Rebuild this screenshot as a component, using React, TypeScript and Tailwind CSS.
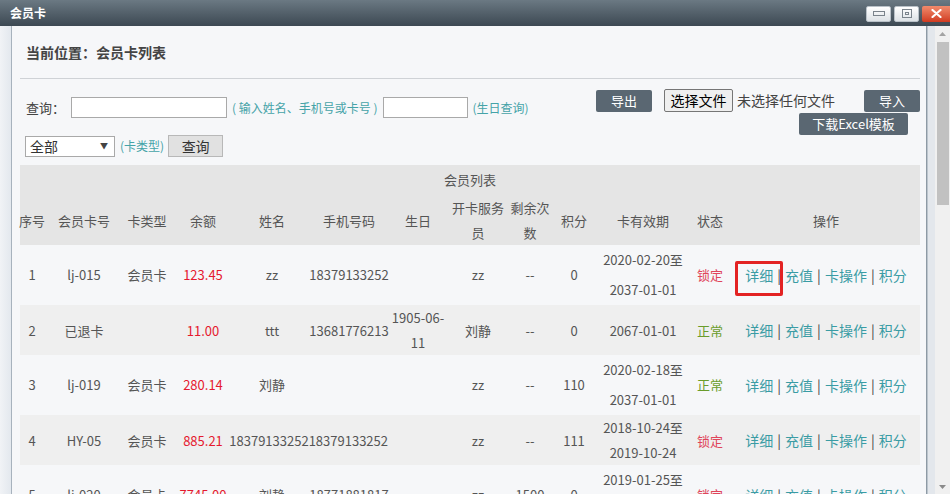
import React from "react";

const COLS =
  "grid grid-cols-[24px_80px_46px_66px_72px_82px_56px_64px_40px_48px_90px_44px_188px]";

type Row = {
  idx: string;
  card: string;
  type: string;
  bal: string;
  name: string;
  phone: string;
  longPhone?: boolean;
  birth?: React.ReactNode;
  staff: string;
  remain: string;
  points: string;
  valid: React.ReactNode;
  status: string;
  ok: boolean;
  odd: boolean;
  highlight?: boolean;
};

const rows: Row[] = [
  {
    idx: "1",
    card: "lj-015",
    type: "会员卡",
    bal: "123.45",
    name: "zz",
    phone: "18379133252",
    staff: "zz",
    remain: "--",
    points: "0",
    valid: (
      <>
        2020-02-20至
        <br />
        2037-01-01
      </>
    ),
    status: "锁定",
    ok: false,
    odd: true,
    highlight: true,
  },
  {
    idx: "2",
    card: "已退卡",
    type: "",
    bal: "11.00",
    name: "ttt",
    phone: "13681776213",
    birth: (
      <>
        1905-06-
        <br />
        11
      </>
    ),
    staff: "刘静",
    remain: "--",
    points: "0",
    valid: "2067-01-01",
    status: "正常",
    ok: true,
    odd: false,
  },
  {
    idx: "3",
    card: "lj-019",
    type: "会员卡",
    bal: "280.14",
    name: "刘静",
    phone: "",
    staff: "zz",
    remain: "--",
    points: "110",
    valid: (
      <>
        2020-02-18至
        <br />
        2037-01-01
      </>
    ),
    status: "正常",
    ok: true,
    odd: true,
  },
  {
    idx: "4",
    card: "HY-05",
    type: "会员卡",
    bal: "885.21",
    name: "",
    phone: "1837913325218379133252",
    longPhone: true,
    staff: "zz",
    remain: "--",
    points: "111",
    valid: (
      <>
        2018-10-24至
        <br />
        2019-10-24
      </>
    ),
    status: "锁定",
    ok: false,
    odd: false,
  },
  {
    idx: "5",
    card: "lj-020",
    type: "会员卡",
    bal: "7745.00",
    name: "刘静",
    phone: "18771881817",
    staff: "zz",
    remain: "1500",
    points: "0",
    valid: (
      <>
        2019-01-25至
        <br />
        2020-01-25
      </>
    ),
    status: "锁定",
    ok: false,
    odd: true,
  },
];

function Cell({ children, className = "" }: { children?: React.ReactNode; className?: string }) {
  return (
    <div className={"flex items-center justify-center text-center whitespace-nowrap " + className}>
      {children}
    </div>
  );
}

function Ops({ highlight }: { highlight?: boolean }) {
  return (
    <div className="relative flex items-center justify-center text-[14px] text-[#3a9ca4] whitespace-nowrap">
      {highlight && (
        <div className="absolute left-[3px] top-[16px] w-[48px] h-[35px] border-[3px] border-[#e32323] rounded-[2px]" />
      )}
      <span>详细</span>
      <span className="mx-[4px] text-[#444]">|</span>
      <span>充值</span>
      <span className="mx-[4px] text-[#444]">|</span>
      <span>卡操作</span>
      <span className="mx-[4px] text-[#444]">|</span>
      <span>积分</span>
    </div>
  );
}

function TableRow({ r }: { r: Row }) {
  const h = r.odd ? "h-[60px] leading-[30px] bg-[#f6f7f9]" : "h-[50px] leading-[25px] bg-[#efefef]";
  return (
    <div className={COLS + " " + h + " text-[13px] text-[#555]"}>
      <Cell>{r.idx}</Cell>
      <Cell>{r.card}</Cell>
      <Cell>{r.type}</Cell>
      <Cell className="text-[#e5192e]">{r.bal}</Cell>
      <Cell>{r.name}</Cell>
      {r.longPhone ? (
        <div className="flex items-center justify-end pr-[2px] whitespace-nowrap">{r.phone}</div>
      ) : (
        <Cell>{r.phone}</Cell>
      )}
      <Cell>{r.birth}</Cell>
      <Cell>{r.staff}</Cell>
      <Cell>{r.remain}</Cell>
      <Cell>{r.points}</Cell>
      <Cell>{r.valid}</Cell>
      <Cell className={r.ok ? "text-[#6a9c2b]" : "text-[#e0455a]"}>{r.status}</Cell>
      <Ops highlight={r.highlight} />
    </div>
  );
}

function WinBtn({ children }: { children: React.ReactNode }) {
  return (
    <div className="w-[25px] h-[16px] rounded-[2px] border border-[#b9c1c8] bg-gradient-to-b from-[#ffffff] to-[#dde2e6] flex items-center justify-center">
      {children}
    </div>
  );
}

export default function App() {
  return (
    <div className="w-[950px] h-[494px] overflow-hidden flex flex-col font-['Noto_Sans_CJK_SC','Microsoft_YaHei',sans-serif] bg-[#f6f7f9]">
      {/* Title bar */}
      <div className="h-[26px] shrink-0 flex items-center justify-between bg-gradient-to-b from-[#6b7983] to-[#3d4953]">
        <span className="pl-[10px] text-[12px] font-bold text-white">会员卡</span>
        <div className="flex items-center gap-[3px] h-full pt-[1px]">
          <WinBtn>
            <div className="w-[12px] h-[5px] border border-[#7a838b]" />
          </WinBtn>
          <WinBtn>
            <div className="w-[10px] h-[9px] border border-[#7a838b] flex items-center justify-center">
              <div className="w-[4px] h-[3px] border border-[#7a838b]" />
            </div>
          </WinBtn>
          <div className="w-[28px] h-[16px] rounded-l-[2px] bg-gradient-to-b from-[#f08a6c] to-[#d0391f] flex items-center justify-center">
            <svg width="11" height="9" viewBox="0 0 11 9">
              <path d="M1.5 1 L9.5 8 M9.5 1 L1.5 8" stroke="#fff" strokeWidth="2.2" strokeLinecap="round" />
            </svg>
          </div>
        </div>
      </div>

      {/* Body */}
      <div className="flex-1 flex min-h-0">
        <div className="w-[11px] shrink-0 bg-gradient-to-r from-[#f1f3f6] to-[#e3e8ee]" />
        <div className="w-px shrink-0 bg-[#a7b2bd]" />

        {/* Main content */}
        <div className="w-[914px] shrink-0 pl-[8px] pr-[6px] bg-[#f6f7f9] overflow-hidden">
          <div className="h-[53px] border-b border-[#cfd2d6] flex items-center pl-[6px]">
            <span className="text-[14px] font-bold text-[#444]">当前位置：会员卡列表</span>
          </div>

          {/* Toolbar */}
          <div className="h-[86px] flex justify-between items-start">
            <div className="pt-[18px] pl-[5px] text-[13px] text-[#444]">
              <div className="flex items-center h-[21px]">
                <span className="w-[46px] pl-[1px]">查询：</span>
                <div className="w-[156px] h-[21px] bg-white border border-[#a9a9a9]" />
                <span className="ml-[5px] text-[12px] text-[#45a3a8]">( 输入姓名、手机号或卡号 )</span>
                <div className="ml-[5px] w-[85px] h-[21px] bg-white border border-[#a9a9a9]" />
                <span className="ml-[5px] text-[12px] text-[#45a3a8]">(生日查询)</span>
              </div>
              <div className="flex items-center h-[22px] mt-[17px]">
                <div className="w-[90px] h-[21px] bg-white border border-[#a9a9a9] flex items-center justify-between pl-[4px] pr-[6px]">
                  <span className="text-[14px] text-[#333]">全部</span>
                  <span className="text-[8px] text-[#444]">▼</span>
                </div>
                <span className="ml-[5px] text-[12px] text-[#45a3a8]">(卡类型)</span>
                <div className="ml-[4px] w-[55px] h-[22px] bg-[#e1e1e1] border border-[#b8b8b8] flex items-center justify-center text-[14px] text-[#333]">
                  查询
                </div>
              </div>
            </div>

            <div className="pt-[10px] flex flex-col items-end">
              <div className="flex items-center">
                <div className="w-[56px] h-[22px] rounded-[2px] bg-[#5a6772] text-white text-[13px] flex items-center justify-center">
                  导出
                </div>
                <div className="ml-[12px] w-[69px] h-[23px] rounded-[2px] bg-[#efefef] border border-[#767676] text-black text-[14px] flex items-center justify-center">
                  选择文件
                </div>
                <span className="ml-[4px] w-[127px] text-[14px] text-[#444]">未选择任何文件</span>
                <div className="w-[56px] h-[22px] rounded-[2px] bg-[#5a6772] text-white text-[13px] flex items-center justify-center">
                  导入
                </div>
              </div>
              <div className="mt-[1px] mr-[12px] w-[109px] h-[22px] rounded-[2px] bg-[#5a6772] text-white text-[13px] flex items-center justify-center">
                下载Excel模板
              </div>
            </div>
          </div>

          {/* Table */}
          <div className="w-[900px]">
            <div className="bg-[#e5e5e5] text-[13px] text-[#555]">
              <div className="h-[30px] flex items-center justify-center">会员列表</div>
              <div className={COLS + " h-[50px] leading-[25px]"}>
                <Cell>序号</Cell>
                <Cell>会员卡号</Cell>
                <Cell>卡类型</Cell>
                <Cell>余额</Cell>
                <Cell>姓名</Cell>
                <Cell>手机号码</Cell>
                <Cell>生日</Cell>
                <Cell>
                  开卡服务
                  <br />员
                </Cell>
                <Cell>
                  剩余次
                  <br />数
                </Cell>
                <Cell>积分</Cell>
                <Cell>卡有效期</Cell>
                <Cell>状态</Cell>
                <Cell>操作</Cell>
              </div>
            </div>
            {rows.map((r) => (
              <TableRow key={r.idx} r={r} />
            ))}
          </div>
        </div>

        {/* Right frame */}
        <div className="w-px shrink-0 bg-[#8e9aa5]" />
        <div className="w-px shrink-0 bg-[#bcc5cd]" />
        <div className="w-[7px] shrink-0 bg-[#e3e7ec]" />
        <div className="w-[15px] shrink-0 bg-[#f0f0f0] flex flex-col">
          <div className="h-[16px] flex items-center justify-center">
            <svg width="7" height="4" viewBox="0 0 7 4">
              <path d="M0 4 L3.5 0 L7 4 Z" fill="#a3a3a3" />
            </svg>
          </div>
          <div className="ml-[2px] mr-[1px] h-[163px] bg-[#c1c1c1]" />
          <div className="flex-1" />
          <div className="h-[9px] flex items-start justify-center">
            <svg width="7" height="4" viewBox="0 0 7 4">
              <path d="M0 0 L3.5 4 L7 0 Z" fill="#8a8a8a" />
            </svg>
          </div>
        </div>
      </div>
    </div>
  );
}
